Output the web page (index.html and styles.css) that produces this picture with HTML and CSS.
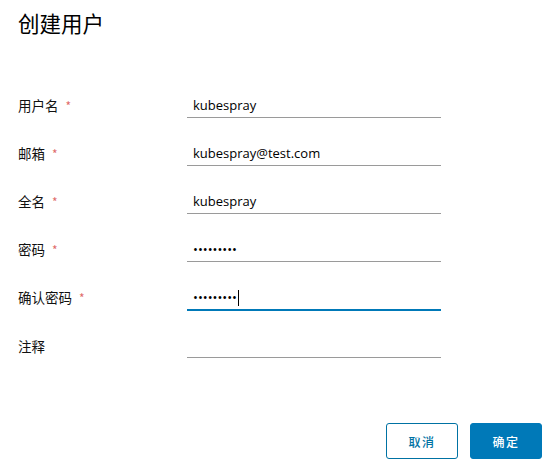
FILE: index.html
```html
<!DOCTYPE html>
<html lang="zh">
<head>
<meta charset="utf-8">
<link rel="stylesheet" href="styles.css">
</head>
<body>
<div class="modal">
  <h3 class="title">创建用户</h3>
  <form class="form">
    <div class="row">
      <label class="label">用户名<span class="req">*</span></label>
      <span class="wrap"><input class="field" type="text" value="kubespray"></span>
    </div>
    <div class="row">
      <label class="label">邮箱<span class="req">*</span></label>
      <span class="wrap"><input class="field" type="text" value="kubespray@test.com"></span>
    </div>
    <div class="row">
      <label class="label">全名<span class="req">*</span></label>
      <span class="wrap"><input class="field" type="text" value="kubespray"></span>
    </div>
    <div class="row">
      <label class="label">密码<span class="req">*</span></label>
      <span class="wrap"><input class="field" type="password" value="kubespray"></span>
    </div>
    <div class="row">
      <label class="label">确认密码<span class="req">*</span></label>
      <span class="wrap"><input class="field active" type="password" value="kubespray"><span class="caret"></span></span>
    </div>
    <div class="row">
      <label class="label">注释</label>
      <span class="wrap"><input class="field" type="text" value=""></span>
    </div>
  </form>
  <div class="actions">
    <button class="btn btn-outline" type="button">取消</button>
    <button class="btn btn-primary" type="button">确定</button>
  </div>
</div>
</body>
</html>
```
FILE: styles.css
```css
* { box-sizing: border-box; }
html, body { margin: 0; padding: 0; background: #fff; }
body {
  width: 554px;
  height: 475px;
  font-family: "Open Sans", "Noto Sans CJK SC", sans-serif;
  color: #000;
}
.modal {
  padding: 9px 12px 0 18px;
}
.title {
  margin: 0;
  font-family: "Noto Sans CJK SC", sans-serif;
  font-size: 21.5px;
  font-weight: 400;
  line-height: 28px;
  color: #000;
}
.form {
  margin-top: 56px;
  display: flex;
  flex-direction: column;
  gap: 23px;
}
.row {
  display: flex;
  align-items: center;
  height: 25px;
}
.label {
  width: 169px;
  font-family: "Noto Sans CJK SC", sans-serif;
  font-size: 13.5px;
  color: #111;
  line-height: 18px;
}
.req {
  color: #e06b6b;
  margin-left: 7px;
  font-size: 12px;
}
.wrap {
  position: relative;
  display: block;
  width: 254px;
  height: 25px;
}
.field {
  display: block;
  width: 254px;
  height: 25px;
  border: none;
  border-bottom: 1px solid #9a9a9a;
  padding: 0 6px;
  margin: 0;
  font-family: "Open Sans", "Noto Sans CJK SC", sans-serif;
  font-size: 13px;
  color: #000;
  background: transparent;
  outline: none;
}
.field.active {
  border-bottom: 2px solid #0079b8;
  height: 26px;
}
.caret {
  position: absolute;
  left: 51px;
  top: 5px;
  width: 1px;
  height: 16px;
  background: #000;
}
.actions {
  margin-top: 65px;
  display: flex;
  justify-content: flex-end;
  gap: 12px;
}
.btn {
  width: 72px;
  height: 36px;
  border-radius: 3px;
  font-family: "Noto Sans CJK SC", sans-serif;
  font-size: 12px;
  font-weight: 500;
  letter-spacing: 1.5px;
  padding: 0;
  cursor: pointer;
}
.btn-outline {
  background: #fff;
  border: 1px solid #0072a3;
  color: #0072a3;
}
.btn-primary {
  background: #0079b8;
  border: 1px solid #0079b8;
  color: #fff;
}
```
